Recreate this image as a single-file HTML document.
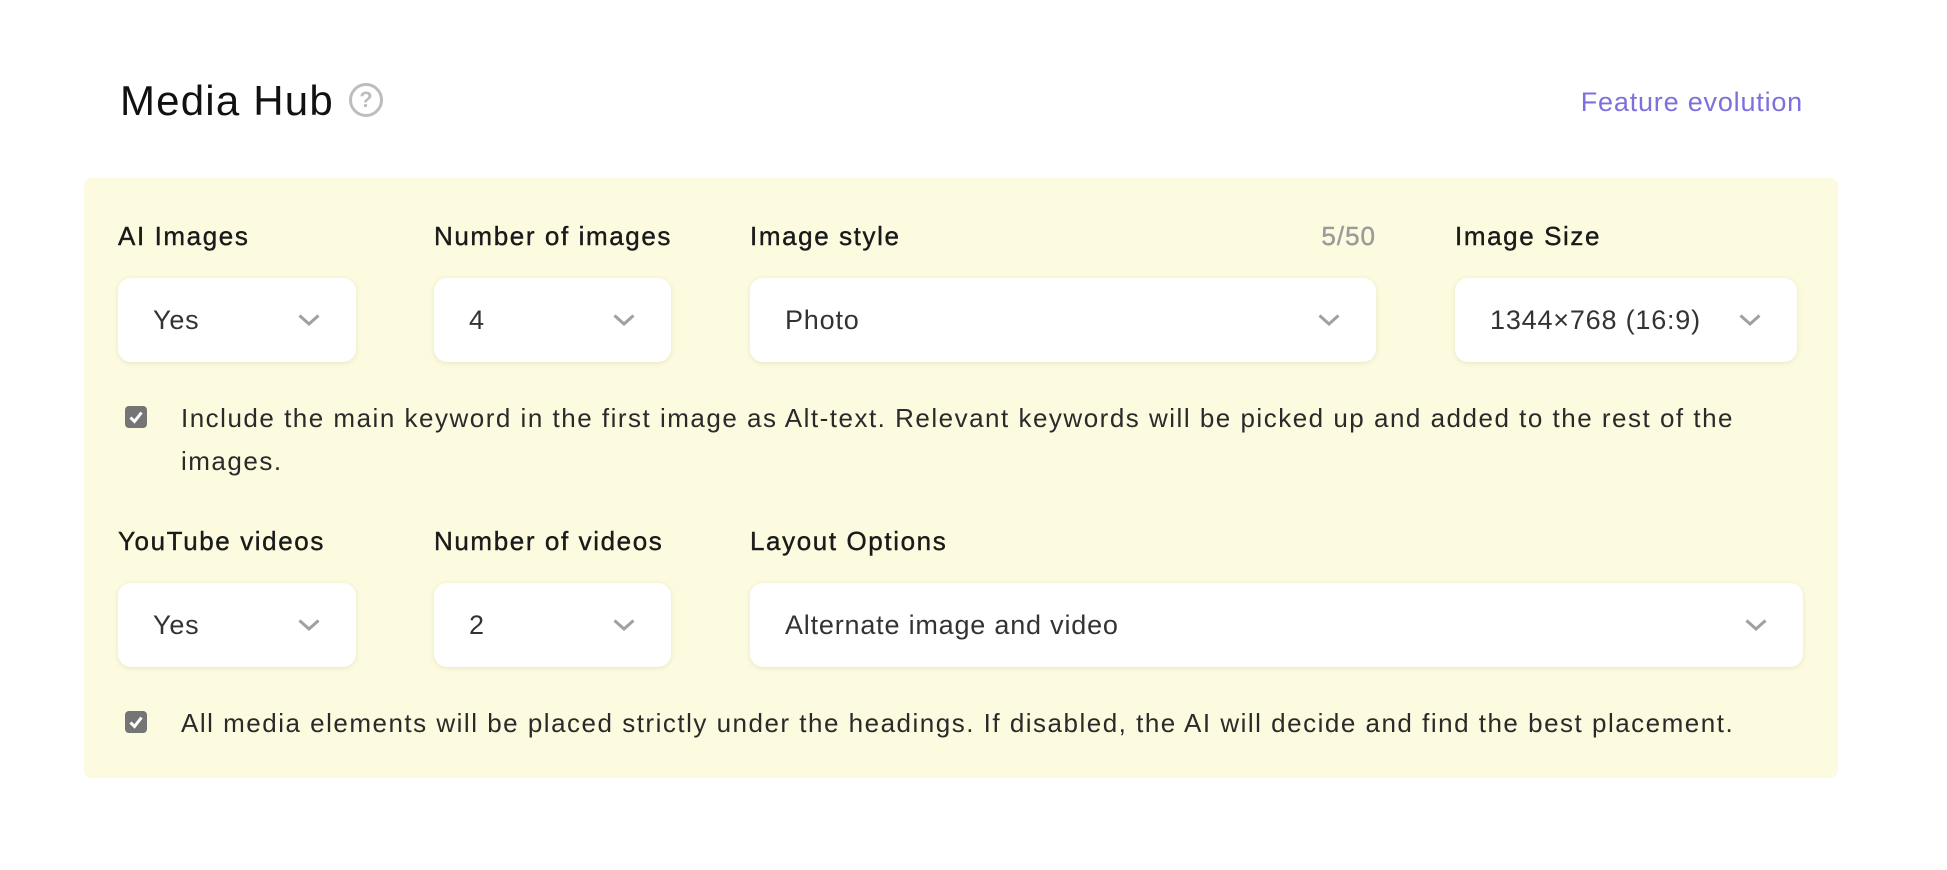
<!DOCTYPE html>
<html><head><meta charset="utf-8"><style>
*{box-sizing:border-box;margin:0;padding:0}
body{width:1947px;height:870px;background:#fff;position:relative;overflow:hidden;font-family:"Liberation Sans",Arial,sans-serif;color:#222}
.abs{position:absolute;white-space:nowrap}
.title{left:120px;top:80px;font-size:42px;line-height:42px;font-weight:500;color:#111;letter-spacing:1.2px}
.help{left:349px;top:83px;width:34px;height:34px;border:3px solid #bdbdbd;border-radius:50%;color:#bdbdbd;font-size:22px;font-weight:bold;line-height:28px;text-align:center}
.fe{right:144px;top:89px;font-size:27px;line-height:27px;color:#7b70de;letter-spacing:0.8px}
.panel{left:84px;top:178px;width:1754px;height:600px;background:#fcfadf;border-radius:8px}
.lbl{font-size:26px;line-height:26px;font-weight:500;color:#1a1a1a;letter-spacing:1.6px;-webkit-text-stroke:0.4px #1a1a1a}
.sel{position:absolute;height:84px;background:#fff;border-radius:13px;box-shadow:0 1px 4px rgba(180,170,120,.25);display:flex;align-items:center;padding-left:35px;font-size:27px;color:#333;font-weight:300;letter-spacing:0.8px}
.sel svg{position:absolute;right:36px;top:36px}
.cb{position:absolute;width:22px;height:22px;background:#757575;border-radius:4px}
.cb svg{position:absolute;left:3px;top:3px}
.txt{font-size:26px;line-height:43px;color:#2a2a2a;letter-spacing:1.5px}
</style></head><body>
<div class="abs title">Media Hub</div>
<div class="abs help">?</div>
<div class="abs fe">Feature evolution</div>
<div class="abs panel"></div>

<div class="abs lbl" style="left:118px;top:223px">AI Images</div>
<div class="abs lbl" style="left:434px;top:223px">Number of images</div>
<div class="abs lbl" style="left:750px;top:223px">Image style</div>
<div class="abs lbl" style="right:571px;top:223px;color:#9a9a9a;-webkit-text-stroke:0.4px #9a9a9a;letter-spacing:1px">5/50</div>
<div class="abs lbl" style="left:1455px;top:223px">Image Size</div>

<div class="sel" style="left:118px;top:278px;width:238px">Yes<svg width="22" height="12" viewBox="0 0 22 12"><path d="M1.5 1.5L11 10L20.5 1.5" fill="none" stroke="#a0a0a0" stroke-width="3"/></svg></div>
<div class="sel" style="left:434px;top:278px;width:237px">4<svg width="22" height="12" viewBox="0 0 22 12"><path d="M1.5 1.5L11 10L20.5 1.5" fill="none" stroke="#a0a0a0" stroke-width="3"/></svg></div>
<div class="sel" style="left:750px;top:278px;width:626px">Photo<svg width="22" height="12" viewBox="0 0 22 12"><path d="M1.5 1.5L11 10L20.5 1.5" fill="none" stroke="#a0a0a0" stroke-width="3"/></svg></div>
<div class="sel" style="left:1455px;top:278px;width:342px">1344×768 (16:9)<svg width="22" height="12" viewBox="0 0 22 12"><path d="M1.5 1.5L11 10L20.5 1.5" fill="none" stroke="#a0a0a0" stroke-width="3"/></svg></div>

<div class="cb" style="left:125px;top:406px"><svg width="16" height="16" viewBox="0 0 16 16"><path d="M2.5 8.5L6.5 12.5L13.5 3.5" fill="none" stroke="#fff" stroke-width="3"/></svg></div>
<div class="abs txt" style="left:181px;top:397px">Include the main keyword in the first image as Alt-text. Relevant keywords will be picked up and added to the rest of the<br>images.</div>

<div class="abs lbl" style="left:118px;top:528px">YouTube videos</div>
<div class="abs lbl" style="left:434px;top:528px">Number of videos</div>
<div class="abs lbl" style="left:750px;top:528px">Layout Options</div>

<div class="sel" style="left:118px;top:583px;width:238px">Yes<svg width="22" height="12" viewBox="0 0 22 12"><path d="M1.5 1.5L11 10L20.5 1.5" fill="none" stroke="#a0a0a0" stroke-width="3"/></svg></div>
<div class="sel" style="left:434px;top:583px;width:237px">2<svg width="22" height="12" viewBox="0 0 22 12"><path d="M1.5 1.5L11 10L20.5 1.5" fill="none" stroke="#a0a0a0" stroke-width="3"/></svg></div>
<div class="sel" style="left:750px;top:583px;width:1053px">Alternate image and video<svg width="22" height="12" viewBox="0 0 22 12"><path d="M1.5 1.5L11 10L20.5 1.5" fill="none" stroke="#a0a0a0" stroke-width="3"/></svg></div>

<div class="cb" style="left:125px;top:711px"><svg width="16" height="16" viewBox="0 0 16 16"><path d="M2.5 8.5L6.5 12.5L13.5 3.5" fill="none" stroke="#fff" stroke-width="3"/></svg></div>
<div class="abs txt" style="left:181px;top:702px">All media elements will be placed strictly under the headings. If disabled, the AI will decide and find the best placement.</div>
</body></html>
